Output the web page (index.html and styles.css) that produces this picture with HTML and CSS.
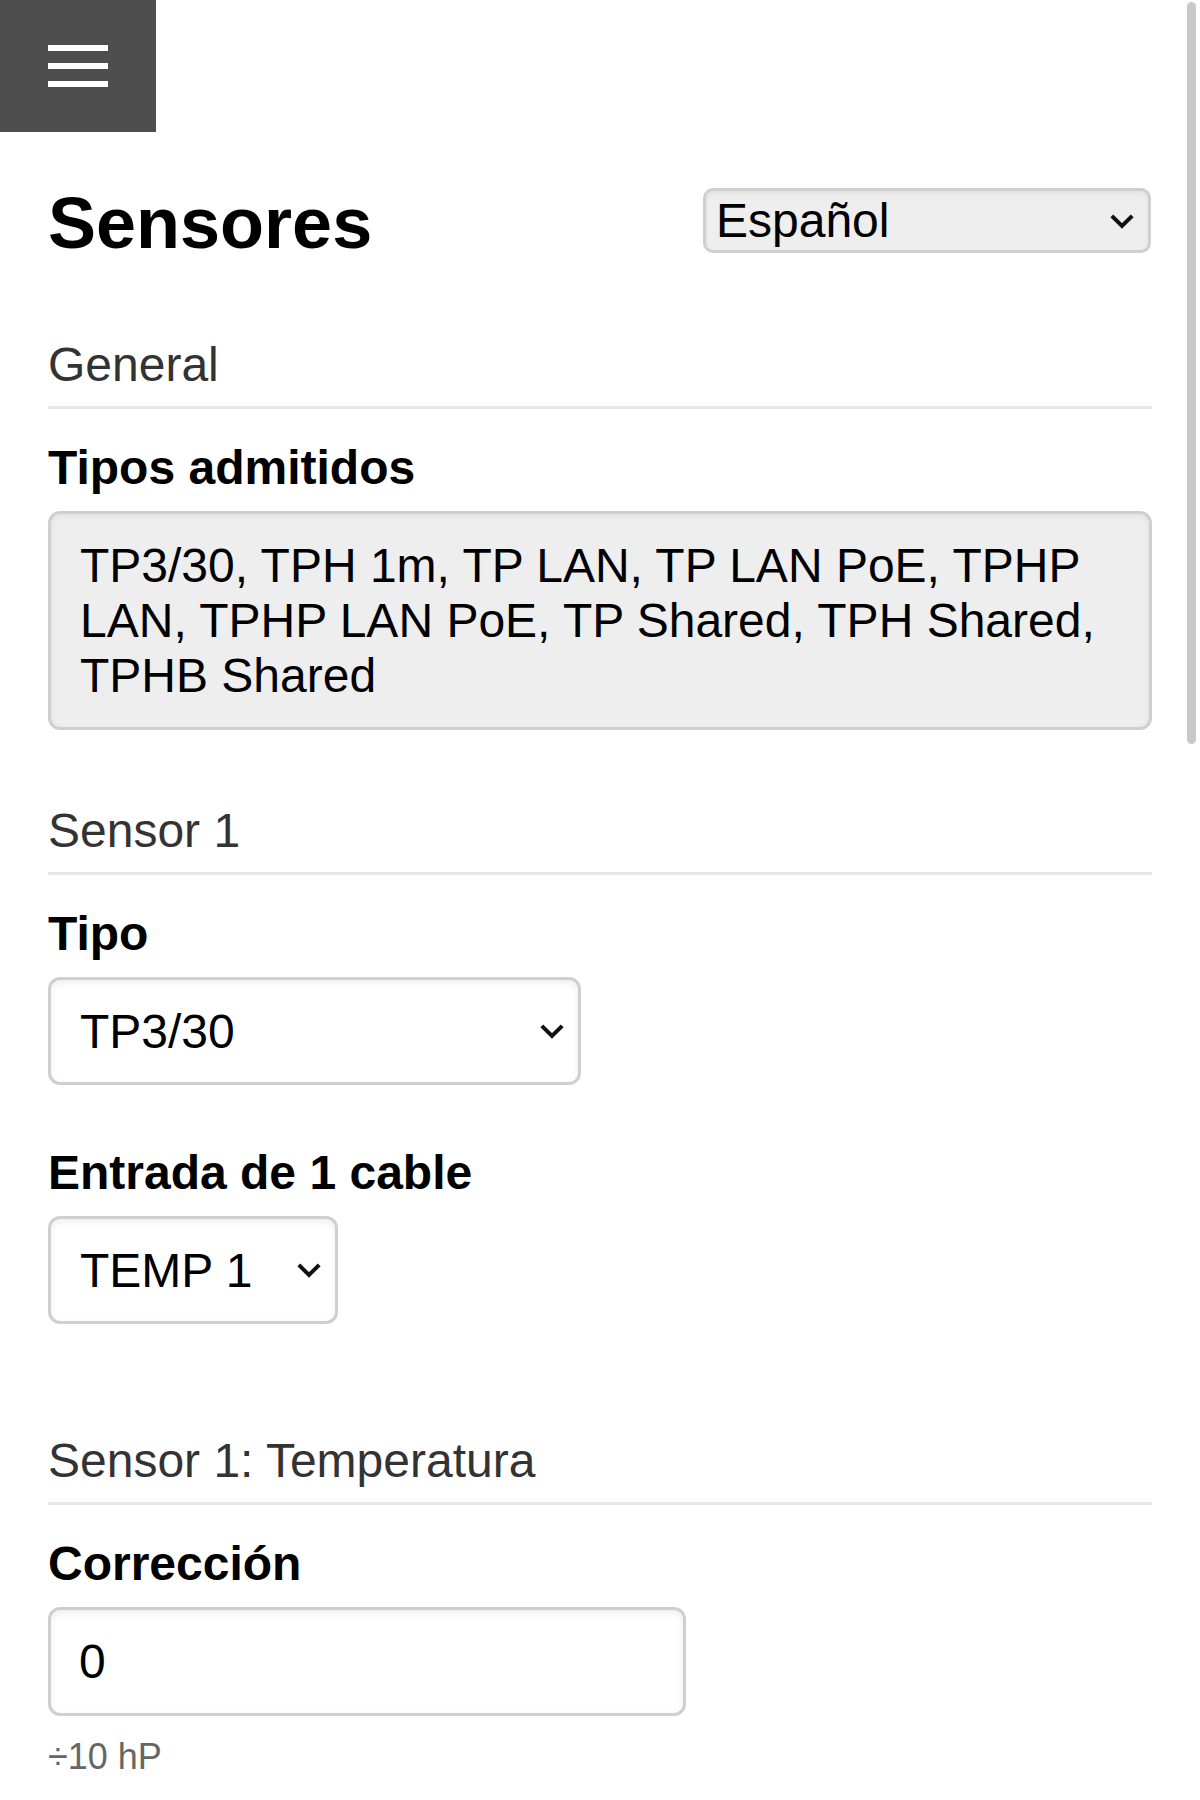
FILE: index.html
```html
<!DOCTYPE html>
<html lang="es">
<head>
<meta charset="utf-8">
<title>Sensores</title>
<link rel="stylesheet" href="styles.css">
</head>
<body>
<div class="menu-btn" aria-label="Menú">
  <span class="bar"></span>
  <span class="bar"></span>
  <span class="bar"></span>
</div>

<main class="content">
  <header class="page-head">
    <h1 class="title">Sensores</h1>
    <div class="select-wrap lang-wrap">
      <select class="lang-select">
        <option>Español</option>
      </select>
      <svg class="chev" viewBox="0 0 26 16" width="26" height="16" aria-hidden="true"><polyline points="2.8,2.8 13,13 23.2,2.8" fill="none" stroke="#111" stroke-width="4"/></svg>
    </div>
  </header>

  <h2 class="section-title first">General</h2>
  <div class="field">
    <label class="field-label">Tipos admitidos</label>
    <div class="readonly-box">TP3/30, TPH 1m, TP LAN, TP LAN PoE, TPHP LAN, TPHP LAN PoE, TP Shared, TPH Shared, TPHB Shared</div>
  </div>

  <h2 class="section-title after-box">Sensor 1</h2>
  <div class="field">
    <label class="field-label">Tipo</label>
    <div class="select-wrap type-wrap">
      <select class="form-select">
        <option>TP3/30</option>
      </select>
      <svg class="chev" viewBox="0 0 26 16" width="26" height="16" aria-hidden="true"><polyline points="2.8,2.8 13,13 23.2,2.8" fill="none" stroke="#111" stroke-width="4"/></svg>
    </div>
  </div>
  <div class="field spaced">
    <label class="field-label">Entrada de 1 cable</label>
    <div class="select-wrap input-wrap">
      <select class="form-select">
        <option>TEMP 1</option>
      </select>
      <svg class="chev" viewBox="0 0 26 16" width="26" height="16" aria-hidden="true"><polyline points="2.8,2.8 13,13 23.2,2.8" fill="none" stroke="#111" stroke-width="4"/></svg>
    </div>
  </div>

  <h2 class="section-title after-field">Sensor 1: Temperatura</h2>
  <div class="field">
    <label class="field-label">Corrección</label>
    <input class="text-input" type="text" value="0">
    <div class="hint">÷10 hP</div>
  </div>
</main>

<div class="scroll-thumb" aria-hidden="true"></div>
</body>
</html>
```

FILE: styles.css
```css
html {
  overflow: hidden;
}

body {
  margin: 0;
  background: #ffffff;
  color: #000000;
  font-family: "Liberation Sans", Arial, Helvetica, sans-serif;
  font-size: 48px;
  line-height: normal;
}

.menu-btn {
  width: 156px;
  height: 132px;
  background: #4e4e4e;
  display: flex;
  flex-direction: column;
  justify-content: center;
  align-items: center;
  gap: 12px;
}

.menu-btn .bar {
  display: block;
  width: 60px;
  height: 6px;
  background: #ffffff;
}

.content {
  padding: 0 48px;
}

.page-head {
  margin-top: 50px;
  display: flex;
  justify-content: space-between;
  align-items: center;
}

.title {
  margin: 0;
  font-size: 72px;
  font-weight: bold;
  line-height: normal;
}

.select-wrap {
  position: relative;
}

.chev {
  position: absolute;
  right: 16px;
  top: 50%;
  transform: translateY(-50%);
  pointer-events: none;
}

.lang-wrap {
  width: 448px;
  margin-right: 1px;
  margin-bottom: 5px;
}

.lang-select {
  -webkit-appearance: none;
  appearance: none;
  box-sizing: border-box;
  width: 100%;
  height: 65px;
  margin: 0;
  padding: 0 50px 0 10px;
  font-family: inherit;
  font-size: 48px;
  color: #000;
  background: #eeeeee;
  border: 3px solid #cfcfcf;
  border-radius: 10px;
  box-shadow: inset 0 2px 5px rgba(0, 0, 0, 0.06);
}

.section-title {
  margin: 0;
  font-size: 48px;
  font-weight: normal;
  color: #333333;
  line-height: normal;
  padding-bottom: 14px;
  border-bottom: 3px solid #e6e6e6;
}

.section-title.first {
  margin-top: 73px;
}

.section-title.after-box {
  margin-top: 73px;
}

.section-title.after-field {
  margin-top: 109px;
}

.field {
  margin-top: 31px;
}

.field.spaced {
  margin-top: 60px;
}

.field-label {
  display: block;
  font-weight: bold;
  font-size: 48px;
  line-height: normal;
  margin-bottom: 16px;
}

.readonly-box {
  background: #eeeeee;
  border: 3px solid #cfcfcf;
  border-radius: 12px;
  padding: 24px 30px 24px 29px;
  box-shadow: inset 0 2px 6px rgba(0, 0, 0, 0.06);
  line-height: normal;
}

.type-wrap {
  width: 533px;
}

.input-wrap {
  width: 290px;
}

.form-select {
  -webkit-appearance: none;
  appearance: none;
  box-sizing: border-box;
  width: 100%;
  height: 108px;
  margin: 0;
  padding: 0 60px 0 29px;
  font-family: inherit;
  font-size: 48px;
  color: #000;
  background: #ffffff;
  border: 3px solid #cfcfcf;
  border-radius: 12px;
  box-shadow: inset 0 3px 7px rgba(0, 0, 0, 0.07);
}

.text-input {
  display: block;
  box-sizing: border-box;
  width: 638px;
  height: 109px;
  margin: 0;
  padding: 0 28px;
  font-family: inherit;
  font-size: 48px;
  color: #000;
  background: #ffffff;
  border: 3px solid #cfcfcf;
  border-radius: 12px;
  box-shadow: inset 0 3px 7px rgba(0, 0, 0, 0.07);
  outline: none;
}

.hint {
  margin-top: 20px;
  font-size: 36px;
  color: #666666;
  line-height: normal;
}

.scroll-thumb {
  position: fixed;
  top: 2px;
  right: 4px;
  width: 9px;
  height: 742px;
  border-radius: 5px;
  background: #c9c9c9;
}
```
